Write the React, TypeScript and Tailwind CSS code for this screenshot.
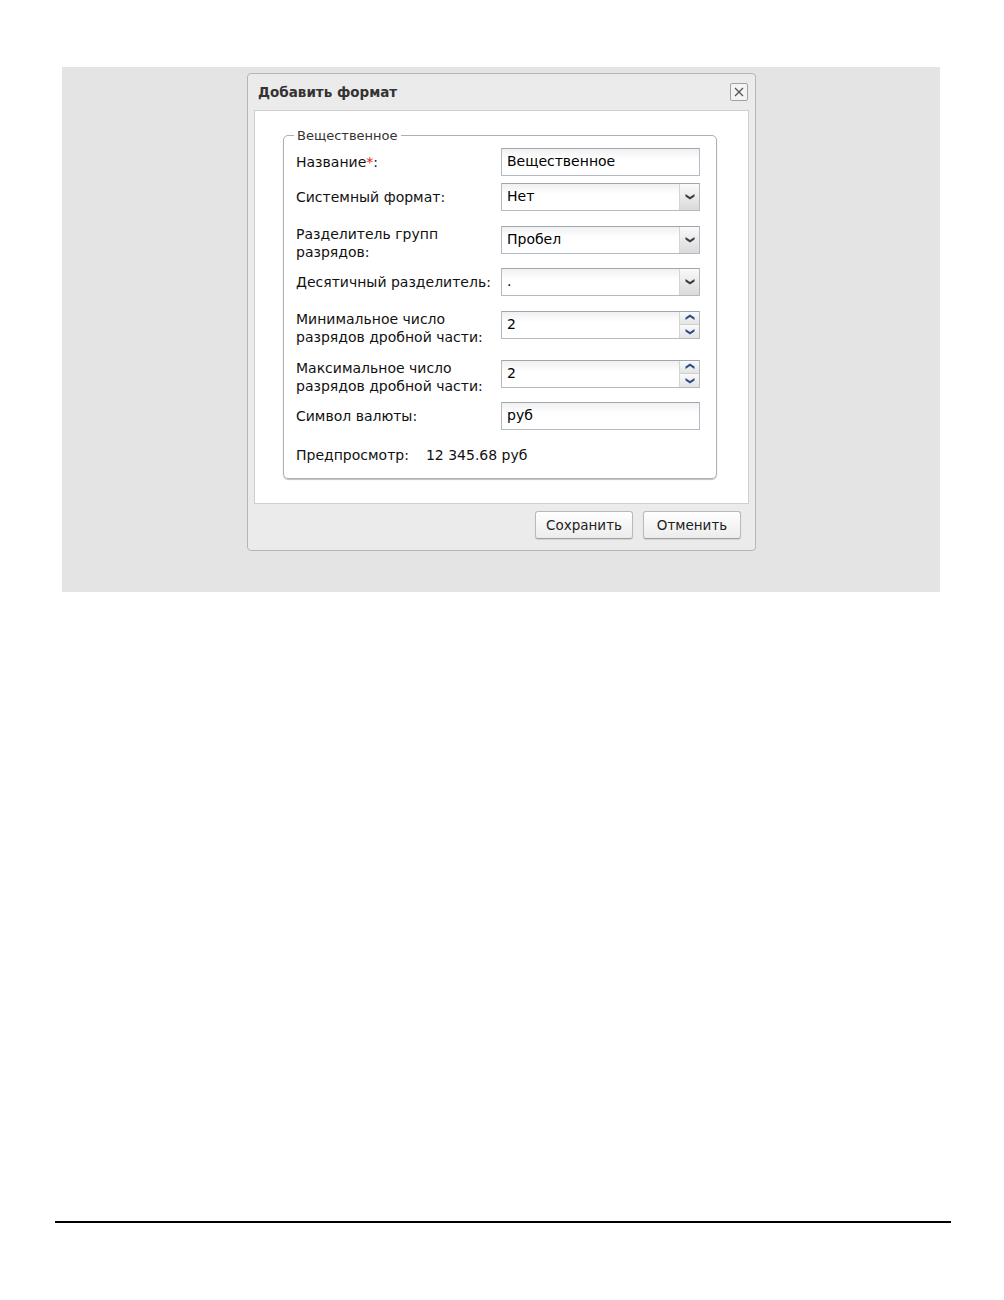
import React from "react";

const font = { fontFamily: '"DejaVu Sans", Verdana, sans-serif' };

function TextInput({ value }: { value: string }) {
  return (
    <div className="flex h-[28px] w-[199px] items-center border border-[#b4bac4] border-t-[#9ea6b2] bg-gradient-to-b from-[#f0f0f0] to-white to-40% px-[5px] text-[14px] text-black">
      {value}
    </div>
  );
}

function Chevron({ up, color }: { up?: boolean; color: string }) {
  return (
    <svg width="10" height="7" viewBox="0 0 10 7" className={up ? "rotate-180" : ""}>
      <path d="M0.5 1 L5 4 L9.5 1 L9.5 3.5 L5 6.5 L0.5 3.5 Z" fill={color} />
    </svg>
  );
}

function SelectInput({ value }: { value: string }) {
  return (
    <div className="flex h-[28px] w-[199px] border border-[#b4bac4] border-t-[#9ea6b2] bg-white text-[14px] text-black">
      <div className="flex flex-1 items-center bg-gradient-to-b from-[#f0f0f0] to-white to-40% px-[5px]">{value}</div>
      <div className="flex w-[20px] items-center justify-center border-l border-[#d4d4d4] bg-gradient-to-b from-[#fafafa] to-[#dadada]">
        <Chevron color="#3c3c3c" />
      </div>
    </div>
  );
}

function SpinInput({ value }: { value: string }) {
  return (
    <div className="flex h-[28px] w-[199px] border border-[#b4bac4] border-t-[#9ea6b2] bg-white text-[14px] text-black">
      <div className="flex flex-1 items-center bg-gradient-to-b from-[#f0f0f0] to-white to-40% px-[5px]">{value}</div>
      <div className="flex w-[20px] flex-col border-l border-[#d4d4d4]">
        <div className="flex flex-1 items-center justify-center border-b border-[#d0d0d0] bg-gradient-to-b from-[#fafafa] to-[#e4e4e4]">
          <Chevron up color="#2d4f86" />
        </div>
        <div className="flex flex-1 items-center justify-center bg-gradient-to-b from-[#fafafa] to-[#e4e4e4]">
          <Chevron color="#2d4f86" />
        </div>
      </div>
    </div>
  );
}

function Row({
  label,
  children,
  className,
  twoLine,
}: {
  label: React.ReactNode;
  children: React.ReactNode;
  className: string;
  twoLine?: boolean;
}) {
  return (
    <div className={`flex ${twoLine ? "items-start" : "items-center"} ${className}`}>
      <div className={`w-[205px] text-[14px] leading-[18px] text-[#111] ${twoLine ? "-mt-[1px]" : ""}`}>
        {label}
      </div>
      {children}
    </div>
  );
}

function Button({ children }: { children: React.ReactNode }) {
  return (
    <button className="h-[28px] w-[98px] rounded-[3px] border border-[#b9b9b9] border-b-[#a0a0a0] bg-gradient-to-b from-white to-[#ececec] text-[13.5px] text-[#222] shadow-[0_1px_1px_rgba(0,0,0,0.1)]">
      {children}
    </button>
  );
}

export default function App() {
  return (
    <div className="h-[1300px] w-[1004px] bg-white pt-[67px]" style={font}>
      <div className="ml-[62px] h-[525px] w-[878px] bg-[#e4e4e4] pt-[6px]">
        <div className="ml-[185px] h-[478px] w-[509px] rounded-[4px] border border-[#b5b5b5] bg-[#ebebeb]">
          <div className="flex h-[36px] items-center justify-between pl-[10px] pr-[7px]">
            <span className="text-[13.5px] font-bold text-[#333]">Добавить формат</span>
            <div className="flex h-[18px] w-[18px] items-center justify-center rounded-[2px] border border-[#a2a2a2] bg-[#f4f4f4]">
              <svg width="10" height="10" viewBox="0 0 10 10">
                <path d="M1 1 L9 9 M9 1 L1 9" stroke="#555" strokeWidth="1.3" />
              </svg>
            </div>
          </div>
          <div className="mx-[6px] h-[394px] border border-[#cfcfcf] bg-white pl-[28px] pt-[15px]">
            <fieldset className="w-[434px] rounded-[5px] border border-[#b0b0b0] px-[12px] pb-[14px] shadow-[0_1px_1px_rgba(0,0,0,0.25)]">
              <legend className="ml-[-2px] px-[3px] text-[13px] text-[#333]">Вещественное</legend>
              <Row label={<>Название<span className="text-[#e02020]">*</span>:</>} className="mt-[2px]">
                <TextInput value="Вещественное" />
              </Row>
              <Row label="Системный формат:" className="mt-[7px]">
                <SelectInput value="Нет" />
              </Row>
              <Row label={<>Разделитель групп<br />разрядов:</>} className="mt-[15px]" twoLine>
                <SelectInput value="Пробел" />
              </Row>
              <Row label="Десятичный разделитель:" className="mt-[7px]">
                <SelectInput value="." />
              </Row>
              <Row label={<>Минимальное число<br />разрядов дробной части:</>} className="mt-[15px]" twoLine>
                <SpinInput value="2" />
              </Row>
              <Row label={<>Максимальное число<br />разрядов дробной части:</>} className="mt-[14px]" twoLine>
                <SpinInput value="2" />
              </Row>
              <Row label="Символ валюты:" className="mt-[7px]">
                <TextInput value="руб" />
              </Row>
              <div className="mt-[16px] flex text-[14px] leading-[18px] text-[#111]">
                <span>Предпросмотр:</span>
                <span className="ml-[17px]">12 345.68 руб</span>
              </div>
            </fieldset>
          </div>
          <div className="flex justify-end gap-[10px] pr-[14px] pt-[7px]">
            <Button>Сохранить</Button>
            <Button>Отменить</Button>
          </div>
        </div>
      </div>
      <div className="ml-[55px] mt-[629px] h-[2px] w-[896px] bg-black" />
    </div>
  );
}
